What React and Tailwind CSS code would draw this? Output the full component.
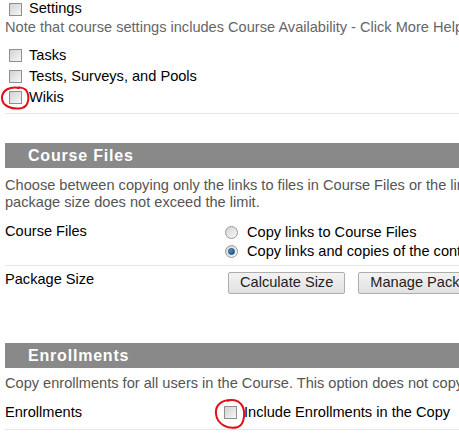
import React from "react";

function Box() {
  return (
    <span className="inline-block w-[13px] h-[13px] shrink-0 border border-[#8e8f8f] bg-gradient-to-br from-[#d2d2d2] to-[#f7f7f7] box-border" />
  );
}

function Radio({ checked }) {
  return (
    <span className="relative inline-flex items-center justify-center w-[13px] h-[13px] shrink-0 rounded-full border border-[#9a9a9a] bg-gradient-to-br from-[#d4d4d4] to-[#f8f8f8] box-border">
      {checked && (
        <span className="w-[7px] h-[7px] rounded-full bg-gradient-to-br from-[#5aa6d8] to-[#0f4f86] border border-[#1d4b73] box-border" />
      )}
    </span>
  );
}

function CheckRow({ label }) {
  return (
    <div className="flex items-center h-[21px] pl-[4px]">
      <Box />
      <span className="ml-[7px]">{label}</span>
    </div>
  );
}

function Header({ children }) {
  return (
    <div className="h-[25px] bg-[#898989] text-white font-bold text-[16px] tracking-[0.8px] flex items-center pl-[23px]">
      {children}
    </div>
  );
}

function Btn({ children }) {
  return (
    <span className="inline-flex items-center h-[22px] px-[11px] border border-[#adadad] rounded-[2px] bg-gradient-to-b from-[#f3f3f3] to-[#e1e1e1] text-[#222] whitespace-nowrap">
      {children}
    </span>
  );
}

export default function App() {
  return (
    <div className="relative w-[459px] h-[434px] overflow-hidden bg-white text-[14.6px] text-black font-['Liberation_Sans',Arial,sans-serif]">
      <div className="w-[800px] pl-[5px] whitespace-nowrap">
        <div className="flex items-center h-[18px] pl-[4px]">
          <Box />
          <span className="ml-[7px]">Settings</span>
        </div>
        <div className="h-[18px] leading-[18px] text-[#666]">
          Note that course settings includes Course Availability - Click More Help for more information.
        </div>
        <div className="mt-[9px]">
          <CheckRow label="Tasks" />
          <CheckRow label="Tests, Surveys, and Pools" />
          <CheckRow label="Wikis" />
        </div>
        <div className="mt-[5px] border-t border-[#e6e6e6]" />

        <div className="mt-[29px]">
          <Header>Course Files</Header>
        </div>
        <div className="mt-[9px] text-[#555] leading-[17px]">
          <div>Choose between copying only the links to files in Course Files or the links and copies of the content. Make sure the</div>
          <div>package size does not exceed the limit.</div>
        </div>
        <div className="flex mt-[10px] pb-[4px] border-b border-[#e6e6e6]">
          <div className="w-[220px] leading-[18px] pt-[1px]">Course Files</div>
          <div className="pt-[2px]">
            <div className="flex items-center h-[19px]">
              <Radio />
              <span className="ml-[9px]">Copy links to Course Files</span>
            </div>
            <div className="flex items-center h-[19px]">
              <Radio checked />
              <span className="ml-[9px]">Copy links and copies of the content</span>
            </div>
          </div>
        </div>
        <div className="flex">
          <div className="w-[223px] mt-[4px] leading-[18px]">Package Size</div>
          <div className="flex mt-[6px] gap-[13px]">
            <Btn>Calculate Size</Btn>
            <Btn>Manage Package</Btn>
          </div>
        </div>

        <div className="mt-[49px]">
          <Header>Enrollments</Header>
        </div>
        <div className="mt-[7px] text-[#555] leading-[17px]">
          Copy enrollments for all users in the Course. This option does not copy the users' grades.
        </div>
        <div className="flex items-center h-[21px] mt-[10px]">
          <div className="w-[219px]">Enrollments</div>
          <Box />
          <span className="ml-[7px]">Include Enrollments in the Copy</span>
        </div>
        <div className="mt-[6px] border-t border-[#e6e6e6]" />
      </div>

      <svg className="absolute left-0 top-0 pointer-events-none" width="459" height="434">
        <path d="M 20 88 C 10 86, 2 90, 2 98 C 2 106, 12 110, 22 108 C 29 106, 30 96, 26 90 C 24 88, 20 87, 17 88" fill="none" stroke="#e0101a" strokeWidth="2" />
        <path d="M 233 400 C 222 399, 215 405, 216 414 C 217 424, 228 430, 238 427 C 245 424, 246 410, 241 404 C 238 400, 232 399, 227 401" fill="none" stroke="#e0101a" strokeWidth="2" />
      </svg>
    </div>
  );
}
